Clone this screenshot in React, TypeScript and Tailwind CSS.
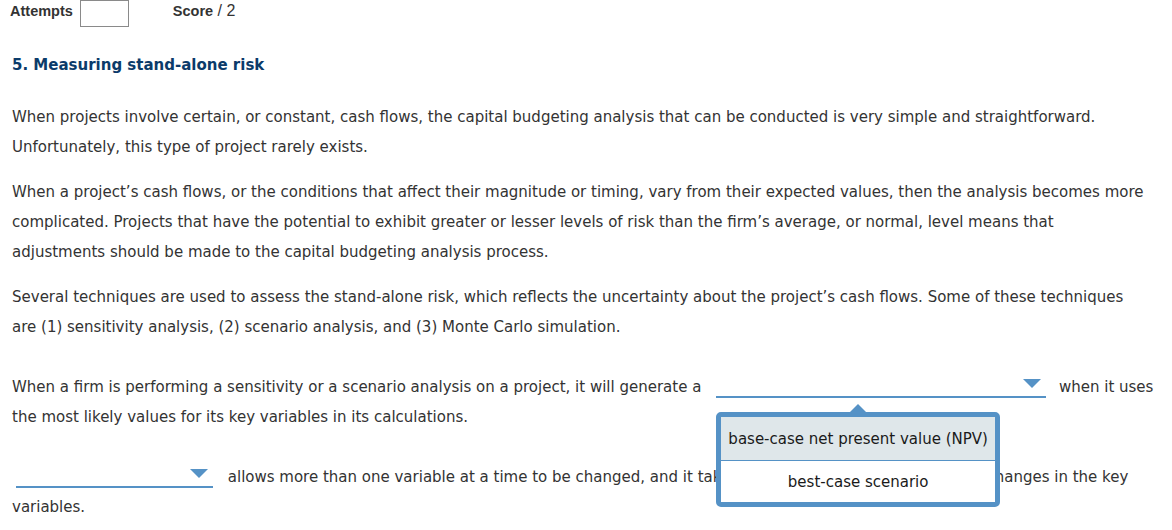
import React from 'react'

const body = "font-['DejaVu_Sans','Verdana',sans-serif] text-[15px] leading-[30px] text-[#333]"

function Caret() {
  return (
    <svg width="18" height="9" viewBox="0 0 18 9" className="absolute right-[5px] bottom-[8px]">
      <polygon points="0,0 18,0 9,9" fill="#5592c6" />
    </svg>
  )
}

function Dropdown({ width, open, className = '' }: { width: number; open?: boolean; className?: string }) {
  return (
    <span
      className={`relative inline-block h-[22px] border-b-2 border-[#5592c6] align-[-6px] ${className}`}
      style={{ width }}
    >
      <Caret />
      {open && (
        <span className="absolute left-0 top-[calc(100%+16px)] z-10 block w-[284px]">
          <svg width="22" height="11" viewBox="0 0 22 11" className="absolute -top-[8px] left-[131px]">
            <polygon points="0,11 11,0 22,11" fill="#5592c6" />
          </svg>
          <span className="relative block overflow-hidden rounded-[5px] border-[5px] border-[#5592c6] bg-white text-center leading-[20px]">
            <span className="block h-[44px] border-b border-[#5592c6] bg-[#dfe7ea] pt-[12px] text-[#1a1a1a]">
              base-case net present value (NPV)
            </span>
            <span className="block h-[41px] pt-[11px] text-[#1a1a1a]">best-case scenario</span>
          </span>
        </span>
      )}
    </span>
  )
}

export default function App() {
  return (
    <div className="min-h-[530px] w-[1172px] overflow-hidden bg-white">
      <div className="flex h-[27px] items-start font-['Liberation_Sans',Arial,sans-serif] text-[#333]">
        <span className="ml-[10px] mt-[1px] text-[14.5px] font-bold">Attempts</span>
        <span className="ml-[7px] block h-[27px] w-[49px] border border-[#8a8a8a] bg-white" />
        <span className="ml-[44px] -mt-[1px] text-[16px]">
          <span className="font-semibold text-[14.5px]">Score</span> / 2
        </span>
      </div>

      <div className={`pl-[12px] pr-[24px] ${body}`}>
        <h2 className="mt-[23px] text-[15px] font-bold leading-[30px] text-[#0b3b6a]">5. Measuring stand-alone risk</h2>

        <p className="mt-[22px]">
          When projects involve certain, or constant, cash flows, the capital budgeting analysis that can be conducted is very simple and straightforward. Unfortunately, this type of project rarely exists.
        </p>

        <p className="mt-[15px]">
          When a project’s cash flows, or the conditions that affect their magnitude or timing, vary from their expected values, then the analysis becomes more complicated. Projects that have the potential to exhibit greater or lesser levels of risk than the firm’s average, or normal, level means that adjustments should be made to the capital budgeting analysis process.
        </p>

        <p className="mt-[15px]">
          Several techniques are used to assess the stand-alone risk, which reflects the uncertainty about the project’s cash flows. Some of these techniques are (1) sensitivity analysis, (2) scenario analysis, and (3) Monte Carlo simulation.
        </p>

        <p className="mt-[30px] -mr-[14px]">
          When a firm is performing a sensitivity or a scenario analysis on a project, it will generate a{' '}
          <Dropdown width={330} open className="ml-[10px] mr-[8px]" />{' '}
          when it uses the most likely values for its key variables in its calculations.
        </p>

        <p className="mt-[30px]">
          <Dropdown width={197} className="ml-[4px] mr-[10px]" /> allows more than one variable at a time to be changed, and it takes into account the probabilities of changes in the key variables.
        </p>
      </div>
    </div>
  )
}
